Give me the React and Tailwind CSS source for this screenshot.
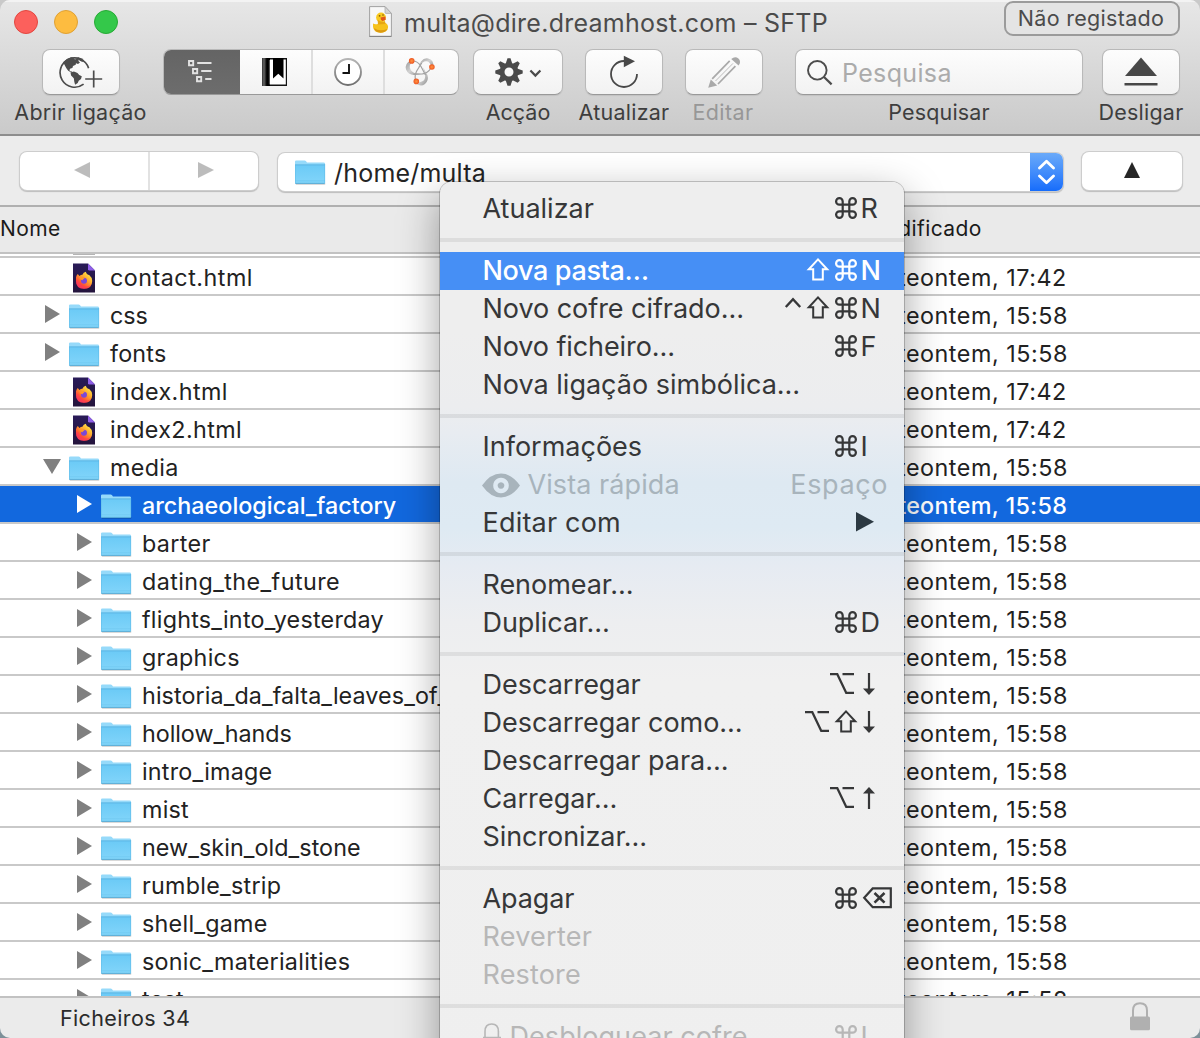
import React from "react";

/* ---------- icons ---------- */

function Folder() {
  return (
    <svg width="32" height="26" viewBox="0 0 32 26" className="block shrink-0">
      <defs>
        <linearGradient id="folderFront" x1="0" y1="0" x2="0" y2="1">
          <stop offset="0" stopColor="#6bcaf6" />
          <stop offset="1" stopColor="#82d5fa" />
        </linearGradient>
      </defs>
      <rect x="0.6" y="23" width="29.8" height="1.8" rx="0.8" fill="#000" opacity="0.2" />
      <path d="M0 1.6Q0 .4 1.2.4h8.4q.9 0 1.5.8l.9 1.2h16.6q1.4 0 1.4 1.2V23H0z" fill="#96dafa" />
      <path d="M0 4.8h30v18q0 1-1 1H1q-1 0-1-1z" fill="url(#folderFront)" />
      <path d="M0 4.9h30" stroke="#58b4e2" strokeWidth=".9" />
      <path d="M0 20.8h30" stroke="#6cc4ee" strokeWidth=".6" />
      <path d="M.3 23.4h29.4" stroke="#55a9d3" strokeWidth=".9" />
      <path d="M.3 5v18M29.7 4v19" stroke="#5fb9e6" strokeWidth=".6" />
    </svg>
  );
}

function FirefoxDoc() {
  return (
    <svg width="22" height="30" viewBox="0 0 22 30" className="block shrink-0">
      <defs>
        <linearGradient id="ffDoc" x1="0" y1="0" x2="0" y2="1">
          <stop offset="0" stopColor="#291b58" />
          <stop offset="1" stopColor="#24143c" />
        </linearGradient>
        <linearGradient id="ffFlame" x1=".9" y1=".1" x2=".2" y2="1">
          <stop offset="0" stopColor="#fff04a" />
          <stop offset=".4" stopColor="#ffa52c" />
          <stop offset=".7" stopColor="#ff5634" />
          <stop offset="1" stopColor="#e8187a" />
        </linearGradient>
      </defs>
      <path d="M0 .6h15l7 7v22H0z" fill="url(#ffDoc)" />
      <path d="M15 .6l7 7h-5.6q-1.4 0-1.4-1.4z" fill="#8f5fe8" />
      <path
        d="M3 14.200Q3.600 12 4.800 11l1.600 2q1.400-1.200 3-1.200 1-2.400 3.400-3 .4 2 2.200 3l1.200.2q3 2.400 3 6 0 7.600-8.200 7.800Q3 25.400 3 18z"
        fill="url(#ffFlame)"
      />
      <path d="M3 18q0 7.600 8 7.800 5.600-.2 7.400-4.400-3 2.800-6.600 1.800Q7 22.500 5 17z" fill="#ff3f52" opacity=".65" />
      <circle cx="11" cy="17.800" r="3" fill="#7a48d8" />
      <path d="M6 14.600q3.200-1 5.600.8-1.800.4-2.200 1.800-1.600.2-3.400-2.600z" fill="#ff9a26" />
    </svg>
  );
}

function DuckDoc() {
  return (
    <svg width="23" height="31" viewBox="0 0 23 31" className="block shrink-0">
      <path d="M.6.6H16l6.400 6.800v23H.6z" fill="#f8f8f8" stroke="#a2a2a2" strokeWidth="1" />
      <path d="M.4 30.400h22" stroke="#808080" strokeWidth="1" />
      <path d="M16 .6l6.400 6.800H17q-1 0-1-1z" fill="#d4d4d4" stroke="#a5a5a5" strokeWidth=".7" />
      <path d="M4 17.500q2.600 1.500 5.200.2l7-1q3.400 2 2.800 5.300-1 4.500-7.400 4.700Q4.600 26.500 4 21z" fill="#f6c21c" />
      <path d="M5 22q5 4 13.500 1-2 3.600-7 3.700Q6 26.500 5 22z" fill="#dc9a10" />
      <circle cx="12" cy="11.500" r="4.900" fill="#f8c920" />
      <path d="M8.600 13.500q4 3.500 7.400 1.500l.4 3-7.400.4z" fill="#e6a713" />
      <path d="M11.500 11.500l4.800-1 .4 3.300-3.200 1.200q-2-1.200-2-3.500z" fill="#e2571c" />
      <circle cx="10.600" cy="9.800" r=".9" fill="#8a5a00" />
      <circle cx="14" cy="9" r=".7" fill="#5e4200" />
    </svg>
  );
}

function GlobePlus() {
  return (
    <svg width="44" height="34" viewBox="0 0 44 34" fill="none" className="block">
      <path d="M29.600 13.200A14.600 14.600 0 1 0 24.600 29.200" stroke="#4c4c4c" strokeWidth="1.700" />
      <path
        d="M4.200 7.200Q7.500 3.200 12 2.200l3.200.6-.6 1.300 2.200.2 1.400-1 1.800.9-.6 1.800 1.600 1.600-2 1.300-2-.6-.3 1.500-2.700 1.200-.6 2.100-2 .4-1 1.500.7 1.200 1.800.2 1.200 1.600-2.300-.7-2.600-1.500-2-2.800L5.600 10z"
        fill="#4c4c4c"
      />
      <path d="M18.500 2q4 .8 6.600 3.200l-1.700 1.800-3-1.400z" fill="#4c4c4c" />
      <path d="M11.500 17.600l3.400-1 3.600 1.300 1.700 2 2.600 1.300-.8 2.700-2.300 1.800-1 2.400-2.600 1.600-.8-3-.5-3.400-2.700-2.700z" fill="#4c4c4c" />
      <path d="M34.700 15.500v17M26.200 24h17" stroke="#4c4c4c" strokeWidth="1.700" />
    </svg>
  );
}

function OutlineIcon() {
  return (
    <svg width="24" height="24" viewBox="0 0 24 24" fill="none" stroke="#e2e2e2" strokeWidth="1.900" className="block">
      <path d="M1 2h4.200v4.200H1zM5 10h4.200v4.200H5zM9 18h4.200v4.200H9z" />
      <path d="M9.200 4H23.500M13.200 12H23.500M17.200 20H23.500" />
    </svg>
  );
}

function BookmarkIcon() {
  return (
    <svg width="26" height="28" viewBox="0 0 26 28" className="block">
      <defs>
        <linearGradient id="spine" x1="0" x2="1">
          <stop offset="0" stopColor="#333" />
          <stop offset=".25" stopColor="#666" />
          <stop offset=".6" stopColor="#000" />
          <stop offset="1" stopColor="#000" />
        </linearGradient>
      </defs>
      <rect width="25" height="28" fill="#151515" />
      <rect width="8" height="28" fill="url(#spine)" />
      <rect x="8" y="1.500" width="15.800" height="25" fill="#fff" />
      <path d="M11 0h10.500v20.500l-5.200-4.700-5.300 4.700z" fill="#000" />
      <path d="M7.400 2v24.400" stroke="#777" strokeWidth=".8" />
    </svg>
  );
}

function ClockIcon() {
  return (
    <svg width="30" height="30" viewBox="0 0 30 30" fill="none" className="block">
      <defs>
        <linearGradient id="rim" x1="0" y1="0" x2="0" y2="1">
          <stop offset="0" stopColor="#b5b5b5" />
          <stop offset="1" stopColor="#6f6f6f" />
        </linearGradient>
      </defs>
      <circle cx="15" cy="15" r="13" fill="#fff" stroke="url(#rim)" strokeWidth="1.900" />
      <path d="M16 7v9H9.500" stroke="#111" strokeWidth="1.900" />
    </svg>
  );
}

function BonjourIcon() {
  return (
    <svg width="32" height="32" viewBox="0 0 32 32" fill="none" className="block">
      <defs>
        <linearGradient id="ring" x1="0" y1="0" x2="1" y2="1">
          <stop offset="0" stopColor="#999" />
          <stop offset=".5" stopColor="#d2d2d2" />
          <stop offset="1" stopColor="#909090" />
        </linearGradient>
        <radialGradient id="dot">
          <stop offset="0" stopColor="#ff9440" />
          <stop offset="1" stopColor="#ee5520" />
        </radialGradient>
      </defs>
      <path d="M6.500 4.500Q.5 7.500 2 13.500q2 5 8 5.500l7-1-6-.8Q6.800 15.800 5.800 11.500q-.3-3 1.700-5z" fill="url(#ring)" />
      <path d="M29.500 11.500Q30 3.500 24 2.400q-4-.7-7 3l-3 6 4.500-4.600q3.400-2.700 6.500-.5 2 1.600 2 4.400z" fill="url(#ring)" />
      <path d="M12 27q4.500 4.500 9 .9 4-3.600 2.400-9l-4.200-7.400 1.800 7.200q.6 4.200-2 6.400-2.600 1.600-5 1z" fill="url(#ring)" />
      <path d="M8.500 5Q14 5 17 10.500l4.500 8.500M27 12q-3 5-8.500 5.800l-9 .4M11.800 25q-1.700-5 .9-10l5-8" stroke="#a2a2a2" strokeWidth="1.200" />
      <circle cx="7.700" cy="4.900" r="2.800" fill="url(#dot)" />
      <circle cx="27.900" cy="11" r="2.800" fill="url(#dot)" />
      <circle cx="12.300" cy="25.400" r="2.800" fill="url(#dot)" />
    </svg>
  );
}

const TEETH = [0, 45, 90, 135, 180, 225, 270, 315];

function GearIcon() {
  return (
    <svg width="28" height="28" viewBox="-14 -14 28 28" className="block">
      {TEETH.map((a) => (
        <path key={a} d="M-3.400 -8L-1.500 -13.700H1.500L3.400 -8z" fill="#4a4a4a" transform={`rotate(${a})`} />
      ))}
      <circle r="6.900" fill="none" stroke="#4a4a4a" strokeWidth="4.800" />
    </svg>
  );
}

function ReloadIcon() {
  return (
    <svg width="30" height="34" viewBox="0 0 30 34" fill="none" className="block">
      <path d="M28 19A13 13 0 1 1 15 6" stroke="#484848" strokeWidth="1.800" />
      <path d="M14.800 .8l11.200 5.400-11.200 6z" fill="#484848" />
    </svg>
  );
}

function PencilIcon() {
  return (
    <svg width="34" height="34" viewBox="0 0 34 34" fill="none" className="block">
      <path d="M22.700 5.800L5.200 23.800M28.400 11.200L11 29" stroke="#a9a9a9" strokeWidth="1.700" />
      <path d="M26 8.400L8.500 26" stroke="#bdbdbd" strokeWidth="1" />
      <path d="M3.800 24.400l6.400 6L1.200 32.800z" fill="#a9a9a9" />
      <path d="M24.200 4q4-3.400 7.200-.4t.2 7z" fill="#a9a9a9" />
    </svg>
  );
}

function Disclosure({ open, light }) {
  const fill = light ? "#ffffff" : "#808080";
  return open ? (
    <svg width="18" height="16" viewBox="0 0 18 16" className="block">
      <path d="M0 0h18L9 15z" fill={fill} />
    </svg>
  ) : (
    <svg width="16" height="18" viewBox="0 0 16 18" className="block">
      <path d="M0 0v18l15-9z" fill={fill} />
    </svg>
  );
}

/* ---------- toolbar ---------- */

const BTN =
  "flex items-center justify-center rounded-[8px] border border-[#b9b9b9] border-b-[#999] bg-gradient-to-b from-[#fdfdfd] to-[#f2f2f2] shadow-[0_1px_1px_rgba(0,0,0,0.08)]";
const LABEL = "mt-[4px] whitespace-nowrap text-[21.5px] leading-[26px] text-[#3e3e3e]";

function Toolbar() {
  return (
    <div className="flex h-[136px] shrink-0 flex-col border-b-2 border-[#8d8d8d] bg-gradient-to-b from-[#e7e7e7] to-[#cacaca] shadow-[inset_0_2px_0_#f3f3f3]">
      <div className="grid h-[49px] grid-cols-[1fr_auto_1fr]">
        <div className="flex gap-4 pt-[10px] pl-[14px]">
          <span className="h-6 w-6 rounded-full border border-[#e2463f] bg-[#fc605c]" />
          <span className="h-6 w-6 rounded-full border border-[#dfa033] bg-[#fdbc40]" />
          <span className="h-6 w-6 rounded-full border border-[#27aa35] bg-[#34c84a]" />
        </div>
        <div className="flex pt-[6px] pr-[3px]">
          <DuckDoc />
          <span className="ml-[12px] mt-[2px] whitespace-nowrap text-[25px] leading-[30px] tracking-[0.26px] text-[#4b4b4b]">
            multa@dire.dreamhost.com – SFTP
          </span>
        </div>
        <div className="flex justify-end pt-px pr-5">
          <span className="h-[35px] w-[176px] whitespace-nowrap rounded-[9px] border-2 border-[#9b9b9b] bg-[#e4e4e4] pr-[2px] text-center text-[21.5px] leading-[31px] tracking-[0.3px] text-[#4b4b4b]">
            Não registado
          </span>
        </div>
      </div>
      <div className="flex pl-[14px]">
        <div className="flex w-[133px] flex-col items-center">
          <div className={`${BTN} h-[46px] w-[78px]`}>
            <GlobePlus />
          </div>
          <span className={`${LABEL} tracking-[0.27px]`}>Abrir ligação</span>
        </div>

        <div className="ml-4 flex h-[46px] w-[296px] overflow-hidden rounded-[8px] border border-[#b9b9b9] border-b-[#999] bg-gradient-to-b from-[#fdfdfd] to-[#f2f2f2]">
          <div className="-my-px -ml-px flex w-[77px] items-center justify-center bg-gradient-to-b from-[#646464] to-[#6d6d6d] pb-[3px] pr-1">
            <OutlineIcon />
          </div>
          <div className="flex w-[71px] items-center justify-center pr-[2px]">
            <BookmarkIcon />
          </div>
          <div className="flex w-[72px] items-center justify-center border-l-2 border-[#dedede]">
            <ClockIcon />
          </div>
          <div className="flex flex-1 items-center justify-center border-l-2 border-[#dedede] pr-[3px]">
            <BonjourIcon />
          </div>
        </div>

        <div className="ml-[14px] flex w-[90px] flex-col items-center">
          <div className={`${BTN} h-[46px] w-[90px] gap-[6px]`}>
            <GearIcon />
            <svg width="13" height="9" viewBox="0 0 13 9" fill="none" className="mt-[2px] block">
              <path d="M1.400 1.400l5 5.200 5-5.200" stroke="#4a4a4a" strokeWidth="2.200" />
            </svg>
          </div>
          <span className={LABEL}>Acção</span>
        </div>

        <div className="ml-[15px] flex w-[92px] flex-col items-center">
          <div className={`${BTN} h-[46px] w-[78px]`}>
            <ReloadIcon />
          </div>
          <span className={`${LABEL} tracking-[0.24px]`}>Atualizar</span>
        </div>

        <div className="ml-[15px] flex w-[78px] flex-col items-center">
          <div className={`${BTN} h-[46px] w-[78px]`}>
            <PencilIcon />
          </div>
          <span className="mt-[4px] mr-[2px] text-[21.5px] leading-[26px] tracking-[0.4px] text-[#979797]">Editar</span>
        </div>

        <div className="ml-8 flex w-[288px] flex-col items-center">
          <div className="flex h-[46px] w-full items-center rounded-[8px] border border-[#b9b9b9] border-b-[#999] bg-gradient-to-b from-[#fdfdfd] to-[#f2f2f2] pl-[11px] shadow-[0_1px_1px_rgba(0,0,0,0.08)]">
            <svg width="26" height="26" viewBox="0 0 26 26" fill="none" className="mt-[2px] block">
              <circle cx="10.300" cy="10.300" r="9.300" stroke="#4d4d4d" strokeWidth="1.900" />
              <path d="M17 17l7.600 7.400" stroke="#4d4d4d" strokeWidth="2.200" />
            </svg>
            <span className="mt-[2px] ml-[9px] text-[25px] leading-[30px] tracking-[0.35px] text-[#ababab]">Pesquisa</span>
          </div>
          <span className={`${LABEL} tracking-[0.16px]`}>Pesquisar</span>
        </div>

        <div className="ml-[15px] flex w-[86px] flex-col items-center">
          <div className={`${BTN} h-[46px] w-[78px]`}>
            <svg width="34" height="30" viewBox="0 0 34 30" className="block">
              <path d="M17 .5L33 19H1z" fill="#474747" />
              <path d="M.5 26h33v2.600H.5z" fill="#474747" />
            </svg>
          </div>
          <span className={`${LABEL} tracking-[0.23px]`}>Desligar</span>
        </div>
      </div>
    </div>
  );
}

/* ---------- path bar ---------- */

const FIELD = "rounded-[7px] bg-white shadow-[0_0_0_1px_#cdcdcd,0_1px_1px_1px_rgba(0,0,0,0.2)]";

function PathBar() {
  return (
    <div className="flex h-[71px] shrink-0 items-start border-b-2 border-[#b0b0b0] bg-[#ececec] pt-4 pl-5">
      <div className={`${FIELD} flex h-[38px] w-[238px]`}>
        <div className="flex w-[130px] items-center justify-center border-r-2 border-[#e2e2e2] pb-[2px]">
          <svg width="16" height="16" viewBox="0 0 16 16" className="ml-[-4px] block">
            <path d="M16 0v16L0 8z" fill="#bcbcbc" />
          </svg>
        </div>
        <div className="flex flex-1 items-center pb-[2px] pl-[48px]">
          <svg width="16" height="16" viewBox="0 0 16 16" className="block">
            <path d="M0 0v16l16-8z" fill="#bcbcbc" />
          </svg>
        </div>
      </div>
      <div className={`${FIELD} ml-5 mt-px flex h-[38px] w-[785px] overflow-hidden`}>
        <div className="ml-[17px] mt-[7px]">
          <Folder />
        </div>
        <span className="ml-[7px] text-[25px] leading-[41px] tracking-[0.2px] text-[#242424]">/home/multa</span>
        <div className="ml-auto flex w-[33px] items-center justify-center bg-gradient-to-b from-[#6aaaf9] to-[#156cfb]">
          <svg width="17" height="26" viewBox="0 0 17 26" fill="none" stroke="#fff" strokeWidth="2.800" className="block">
            <path d="M1.500 9l7-6.800 7 6.800M1.500 17l7 6.800 7-6.800" strokeLinecap="round" strokeLinejoin="round" />
          </svg>
        </div>
      </div>
      <div className={`${FIELD} ml-[19px] flex h-[38px] w-[100px] items-center justify-center pb-[2px]`}>
        <svg width="16" height="16" viewBox="0 0 16 16" className="block">
          <path d="M8 0l8 16H0z" fill="#262626" />
        </svg>
      </div>
    </div>
  );
}

/* ---------- file list ---------- */

const FILES = [
  { name: "contact.html", kind: "html", time: "17:42", track: "tracking-[0.5px]" },
  { name: "css", kind: "dir", track: "tracking-[-0.1px]" },
  { name: "fonts", kind: "dir", track: "tracking-[0.23px]" },
  { name: "index.html", kind: "html", time: "17:42", track: "tracking-[0.42px]" },
  { name: "index2.html", kind: "html", time: "17:42", track: "tracking-[0.38px]" },
  { name: "media", kind: "dir", open: true, track: "tracking-[0.35px]" },
  { name: "archaeological_factory", kind: "dir", deep: true, selected: true, track: "tracking-[0.02px]" },
  { name: "barter", kind: "dir", deep: true, track: "tracking-[0.36px]" },
  { name: "dating_the_future", kind: "dir", deep: true, track: "tracking-[0.43px]" },
  { name: "flights_into_yesterday", kind: "dir", deep: true, track: "tracking-[0.24px]" },
  { name: "graphics", kind: "dir", deep: true, track: "tracking-[0.3px]" },
  { name: "historia_da_falta_leaves_of_", kind: "dir", deep: true, track: "tracking-[0.1px]" },
  { name: "hollow_hands", kind: "dir", deep: true, track: "tracking-[-0.04px]" },
  { name: "intro_image", kind: "dir", deep: true, track: "tracking-[0.23px]" },
  { name: "mist", kind: "dir", deep: true, track: "tracking-[0.22px]" },
  { name: "new_skin_old_stone", kind: "dir", deep: true, track: "tracking-[0.08px]" },
  { name: "rumble_strip", kind: "dir", deep: true, track: "tracking-[0.27px]" },
  { name: "shell_game", kind: "dir", deep: true, track: "tracking-[0.27px]" },
  { name: "sonic_materialities", kind: "dir", deep: true, track: "tracking-[0.27px]" },
  { name: "test", kind: "dir", deep: true, track: "tracking-[0.25px]" },
];

function FileRow({ file }) {
  const { name, kind, time = "15:58", open, deep, selected, track } = file;
  return (
    <div
      className={`flex h-[38px] shrink-0 border-b-2 border-[#c9c9c9] text-[23.3px] leading-[40px] ${
        selected ? "bg-[#1268de] font-medium text-white" : "bg-white text-[#222]"
      }`}
    >
      <div className={`flex h-9 w-[864px] shrink-0 ${deep ? "pl-[77px]" : "pl-[45px]"}`}>
        <div className={`w-6 shrink-0 ${open ? "-ml-[2px] mr-[2px] pt-[11px]" : "pt-[9px]"}`}>
          {kind === "dir" && <Disclosure open={open} light={selected} />}
        </div>
        <div className="flex w-[41px] shrink-0">
          {kind === "dir" ? (
            <div className="pt-2">
              <Folder />
            </div>
          ) : (
            <div className="pl-[4px] pt-[5px]">
              <FirefoxDoc />
            </div>
          )}
        </div>
        <span className={`whitespace-nowrap ${track}`}>{name}</span>
      </div>
      <span className={`whitespace-nowrap pl-[3px] ${selected ? "tracking-[0.3px]" : "tracking-[0.55px]"}`}>
        Anteontem, {time}
      </span>
    </div>
  );
}

function FileList() {
  return (
    <>
      <div className="flex h-[47px] shrink-0 border-b-2 border-[#c2c2c2] bg-[#eaeaea] text-[21px] leading-[44px] text-[#1b1b1b]">
        <span className="w-[866px] tracking-[0.4px]">Nome</span>
        <span className="tracking-[0.4px]">Modificado</span>
      </div>
      <div className="flex h-[742px] shrink-0 flex-col overflow-hidden bg-white">
        <div className="h-[4px] shrink-0 border-b-2 border-[#c9c9c9] pl-[73px]">
          <div className="h-px w-[22px] bg-[#b5b5b5]" />
        </div>
        {FILES.map((f) => (
          <FileRow key={f.name} file={f} />
        ))}
      </div>
    </>
  );
}

function StatusBar() {
  return (
    <div className="flex h-[42px] shrink-0 items-start justify-between border-t-2 border-[#c2c2c2] bg-[#ebebeb] pl-[60px] pr-[49px]">
      <span className="text-[21.5px] leading-[40px] tracking-[0.36px] text-[#2a2a2a]">Ficheiros 34</span>
      <svg width="22" height="29" viewBox="0 0 22 29" className="mt-[4px] block">
        <path d="M4 15V8.500Q4 1.200 11 1.200T18 8.500V15" fill="none" stroke="#b0b0b0" strokeWidth="2" />
        <rect x="1" y="14.500" width="20" height="13.700" rx="1.500" fill="#b0b0b0" />
      </svg>
    </div>
  );
}

/* ---------- context menu ---------- */

function Key({ type }) {
  const common = { fill: "none", stroke: "currentColor", className: "block shrink-0 overflow-visible" };
  if (type === "cmd")
    return (
      <svg width="22" height="22" viewBox="2 2 20 20" strokeWidth="2" aria-label="⌘" {...common}>
        <path d="M15 6v12a3 3 0 1 0 3-3H6a3 3 0 1 0 3 3V6a3 3 0 1 0-3 3h12a3 3 0 1 0-3-3" />
      </svg>
    );
  if (type === "shift")
    return (
      <svg width="22" height="22" viewBox="0 0 22 22" strokeWidth="2" aria-label="⇧" {...common}>
        <path d="M11 .4L1.800 10.200H6.200V20.600H15.800V10.200H20.200z" />
      </svg>
    );
  if (type === "ctrl")
    return (
      <svg width="16" height="22" viewBox="0 0 16 22" strokeWidth="2.400" aria-label="^" {...common}>
        <path d="M.8 10L8 2.200 15.200 10" />
      </svg>
    );
  if (type === "opt")
    return (
      <svg width="24" height="22" viewBox="0 0 24 22" strokeWidth="2.200" aria-label="⌥" {...common}>
        <path d="M0 1.200H7.300L16.200 19.800H24M12.500 1.200H24" />
      </svg>
    );
  if (type === "del")
    return (
      <svg width="31" height="22" viewBox="0 0 31 22" strokeWidth="2.200" aria-label="⌫" {...common}>
        <path d="M2.200 10.800L10.700 1.400H28.800V20.200H10.700z" />
        <path d="M12.500 6l10 9.600M22.500 6l-10 9.600" strokeWidth="2.600" />
      </svg>
    );
  return (
    <svg width="14" height="22" viewBox="0 0 14 22" strokeWidth="2.200" aria-label={type === "up" ? "↑" : "↓"} {...common}>
      {type === "up" ? (
        <>
          <path d="M7 22V4" />
          <path d="M7 0l6 6.400H1z" fill="currentColor" stroke="none" />
        </>
      ) : (
        <>
          <path d="M7 0v18" />
          <path d="M7 22l6-6.400H1z" fill="currentColor" stroke="none" />
        </>
      )}
    </svg>
  );
}

const MENU = [
  [{ label: "Atualizar", mods: ["cmd"], letter: "R" }],
  [
    { label: "Nova pasta…", mods: ["shift", "cmd"], letter: "N", active: true, track: "tracking-[-0.35px]" },
    { label: "Novo cofre cifrado…", mods: ["ctrl", "shift", "cmd"], letter: "N", track: "tracking-[-0.05px]" },
    { label: "Novo ficheiro…", mods: ["cmd"], letter: "F", track: "tracking-[-0.1px]" },
    { label: "Nova ligação simbólica…" },
  ],
  [
    { label: "Informações", mods: ["cmd"], letter: "I" },
    { label: "Vista rápida", icon: "eye", word: "Espaço", off: true, track: "tracking-[0.08px]" },
    { label: "Editar com", submenu: true, track: "tracking-[0.2px]" },
  ],
  [
    { label: "Renomear…", track: "tracking-[-0.05px]" },
    { label: "Duplicar…", mods: ["cmd"], letter: "D", track: "tracking-[-0.05px]" },
  ],
  [
    { label: "Descarregar", mods: ["opt"], arrow: "down" },
    { label: "Descarregar como…", mods: ["opt", "shift"], arrow: "down", track: "tracking-[-0.03px]" },
    { label: "Descarregar para…", track: "tracking-[-0.03px]" },
    { label: "Carregar…", mods: ["opt"], arrow: "up", track: "tracking-[0.05px]" },
    { label: "Sincronizar…", track: "tracking-[-0.08px]" },
  ],
  [
    { label: "Apagar", mods: ["cmd"], arrow: "del", track: "tracking-[-0.1px]" },
    { label: "Reverter", off: true, track: "tracking-[0.26px]" },
    { label: "Restore", off: true, track: "tracking-[0.16px]" },
  ],
  [{ label: "Desbloquear cofre", icon: "lock", mods: ["cmd"], letter: "L", off: true, track: "tracking-[0.05px]" }],
];

function MenuItem({ item }) {
  const { label, mods = [], letter, arrow, active, off, icon, word, submenu, track = "" } = item;
  const tone = active
    ? "bg-[#468ff5] text-white font-medium"
    : off
      ? icon === "eye"
        ? "text-[#a8b4bc]"
        : "text-[#b7b7b7]"
      : "text-[#363738]";
  return (
    <div className={`flex h-[38px] pl-[42.5px] text-[27px] leading-[37px] ${tone}`}>
      {icon === "eye" && (
        <svg width="38" height="25" viewBox="0 0 38 25" className="-ml-[1px] mr-[8px] mt-[7px] block">
          <path
            fillRule="evenodd"
            fill="currentColor"
            d="M0 12.500Q8.500.5 19 .5T38 12.500Q29.500 24.500 19 24.500T0 12.500zM19 4.700a7.800 7.800 0 1 0 .01 0zM19 9.200a3.300 3.300 0 1 1-.01 0z"
          />
        </svg>
      )}
      {icon === "lock" && (
        <svg width="18" height="28" viewBox="0 0 18 28" fill="none" stroke="currentColor" strokeWidth="1.600" className="mr-[9px] mt-[5px] block">
          <path d="M2 15V8.500Q2 1 8.700 1t6.700 7.500V15M0 14.600h18v12H0z" />
        </svg>
      )}
      <span className={`whitespace-nowrap ${track}`}>{label}</span>
      {word && <span className="ml-auto pr-[16px] tracking-[0.6px]">{word}</span>}
      {submenu && (
        <svg width="18" height="20" viewBox="0 0 18 20" className="ml-auto mr-[30px] mt-[8px] block">
          <path d="M0 0v19.500l18-9.700z" fill="#2c3942" />
        </svg>
      )}
      {mods.length > 0 && (
        <div className="ml-auto flex">
          <div className={`flex gap-[6px] pt-[7px] ${mods.length === 1 && mods[0] === "opt" ? "mr-[3px]" : ""}`}>
            {mods.map((m) => (
              <Key key={m} type={m} />
            ))}
          </div>
          {letter ? (
            <span className="w-[47px] pl-[3.5px]">{letter}</span>
          ) : (
            <div className="w-[47px] pl-[5px] pt-[7px]">
              <Key type={arrow} />
            </div>
          )}
        </div>
      )}
    </div>
  );
}

function ContextMenu() {
  return (
    <div className="absolute left-[440px] top-[182px] h-[900px] w-[464px] overflow-hidden rounded-t-[12px] bg-[linear-gradient(180deg,#eeeeee_0px,#eeeeee_150px,#ecedef_225px,#e8ecf1_250px,#dee9f2_300px,#deeaf3_345px,#e6ebf2_385px,#edeef0_440px,#f0f0f0_500px,#efefef_900px)] pt-2 shadow-[0_0_0_1px_rgba(0,0,0,0.2),0_14px_42px_rgba(0,0,0,0.38)]">
      {MENU.map((group, i) => (
        <React.Fragment key={group[0].label}>
          {i > 0 && (
            <div className="h-6 pt-[10px]">
              <div className="h-1 bg-black/7" />
            </div>
          )}
          {group.map((item) => (
            <MenuItem key={item.label} item={item} />
          ))}
        </React.Fragment>
      ))}
    </div>
  );
}

export default function App() {
  return (
    <div className="relative h-[1038px] w-[1200px] overflow-hidden bg-[linear-gradient(180deg,#c9c9c9_50%,#7d9099_50%)] font-[Inter,sans-serif]">
      <div className="flex h-full flex-col overflow-hidden rounded-[10px]">
        <Toolbar />
        <PathBar />
        <FileList />
        <StatusBar />
      </div>
      <ContextMenu />
    </div>
  );
}
